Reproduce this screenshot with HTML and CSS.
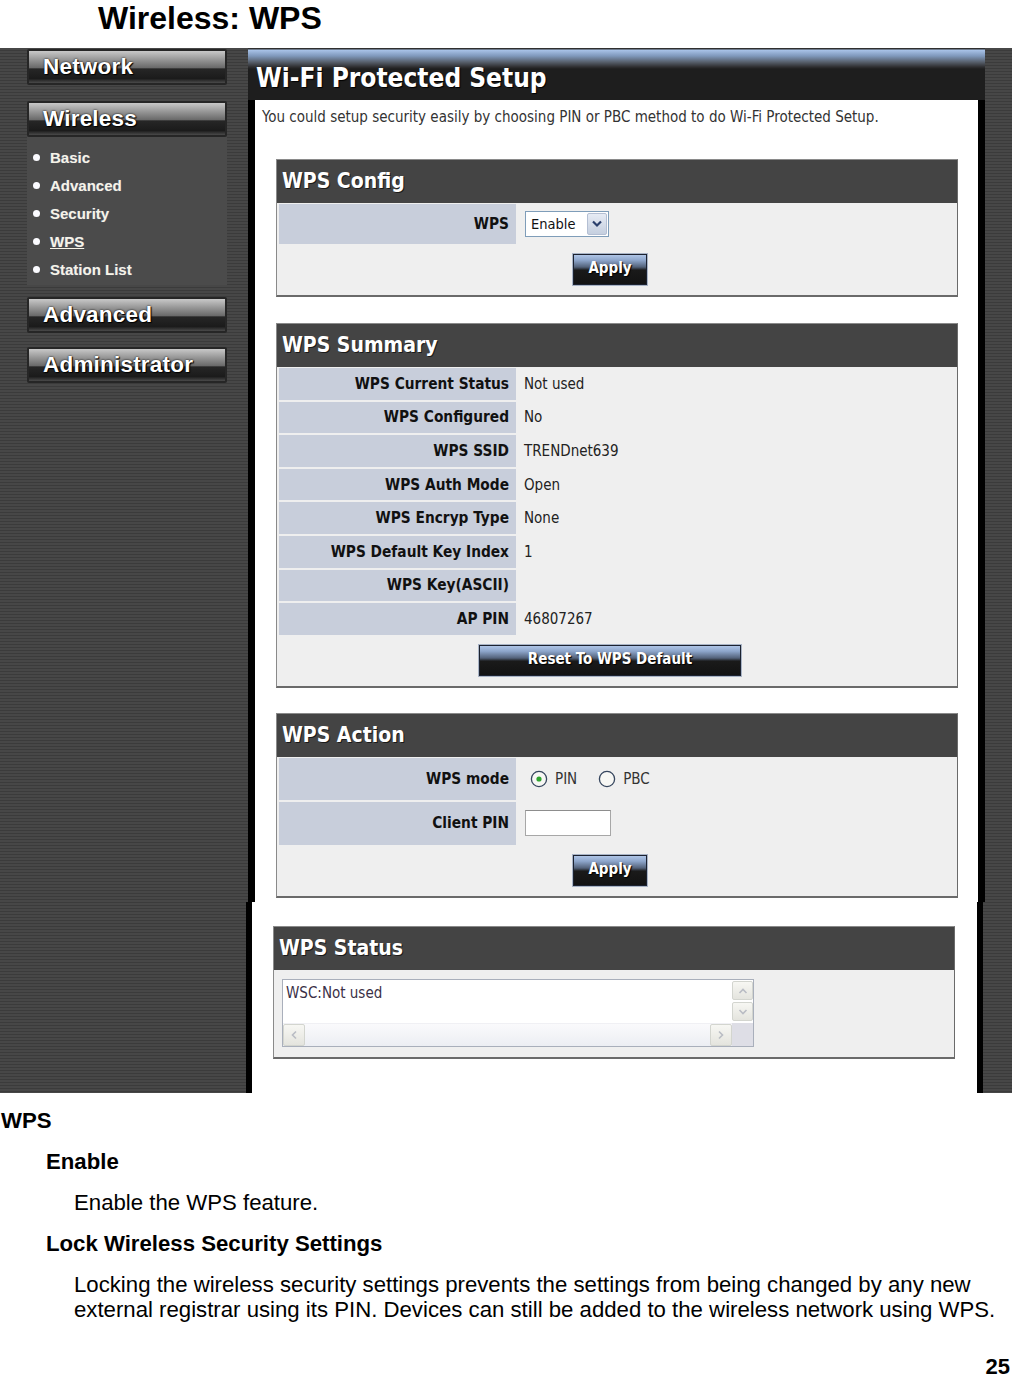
FILE: index.html
```html
<!DOCTYPE html>
<html>
<head>
<meta charset="utf-8">
<title>Wireless: WPS</title>
<link rel="stylesheet" href="styles.css">
</head>
<body>
<div class="doc-title">Wireless: WPS</div>
<div class="shot">
  <div class="sidebar">
    <div class="nav-btn nb-network">Network</div>
    <div class="nav-btn nb-wireless">Wireless</div>
    <ul class="submenu">
      <li>Basic</li>
      <li>Advanced</li>
      <li>Security</li>
      <li class="current">WPS</li>
      <li>Station List</li>
    </ul>
    <div class="nav-btn nb-adv">Advanced</div>
    <div class="nav-btn nb-admin">Administrator</div>
  </div>
  <div class="main">
    <div class="upper">
      <div class="page-head">Wi-Fi Protected Setup</div>
      <div class="upper-body">
        <p class="intro">You could setup security easily by choosing PIN or PBC method to do Wi-Fi Protected Setup.</p>

        <section class="box box-config">
          <div class="box-head">WPS Config</div>
          <div class="rows">
            <div class="lbl row-40">WPS</div>
            <div class="val">
              <div class="select">
                <span class="select-text">Enable</span>
                <span class="select-btn"><svg width="12" height="8" viewBox="0 0 12 8"><path d="M2 1.5 L6 5.5 L10 1.5" fill="none" stroke="#2b3f6c" stroke-width="2.2"/></svg></span>
              </div>
            </div>
          </div>
          <div class="btn-row"><span class="btn btn-apply">Apply</span></div>
        </section>

        <section class="box box-summary">
          <div class="box-head">WPS Summary</div>
          <div class="rows rows-summary">
            <div class="lbl">WPS Current Status</div><div class="val">Not used</div>
            <div class="lbl">WPS Configured</div><div class="val">No</div>
            <div class="lbl">WPS SSID</div><div class="val">TRENDnet639</div>
            <div class="lbl">WPS Auth Mode</div><div class="val">Open</div>
            <div class="lbl">WPS Encryp Type</div><div class="val">None</div>
            <div class="lbl">WPS Default Key Index</div><div class="val">1</div>
            <div class="lbl">WPS Key(ASCII)</div><div class="val"></div>
            <div class="lbl">AP PIN</div><div class="val">46807267</div>
          </div>
          <div class="btn-row"><span class="btn btn-reset">Reset To WPS Default</span></div>
        </section>

        <section class="box box-action">
          <div class="box-head">WPS Action</div>
          <div class="rows rows-action">
            <div class="lbl">WPS mode</div>
            <div class="val radios">
              <span class="radio"><svg width="18" height="18" viewBox="0 0 18 18"><circle cx="9" cy="9" r="7.6" fill="#f7f7f4" stroke="#36465e" stroke-width="1.3"/><circle cx="9" cy="9" r="2.6" fill="#2fa52f"/></svg>PIN</span>
              <span class="radio"><svg width="18" height="18" viewBox="0 0 18 18"><circle cx="9" cy="9" r="7.6" fill="#f7f7f4" stroke="#36465e" stroke-width="1.3"/></svg>PBC</span>
            </div>
            <div class="lbl">Client PIN</div>
            <div class="val"><span class="text-input"></span></div>
          </div>
          <div class="btn-row"><span class="btn btn-apply">Apply</span></div>
        </section>
      </div>
    </div>
    <div class="lower">
      <section class="box box-status">
        <div class="box-head">WPS Status</div>
        <div class="status-body">
          <div class="ta">
            <div class="ta-text">WSC:Not used</div>
            <div class="vscroll">
              <span class="sbtn"><svg width="10" height="8" viewBox="0 0 10 8"><path d="M1.5 6 L5 2.5 L8.5 6" fill="none" stroke="#b9bcc4" stroke-width="1.6"/></svg></span>
              <span class="sbtn"><svg width="10" height="8" viewBox="0 0 10 8"><path d="M1.5 2 L5 5.5 L8.5 2" fill="none" stroke="#b9bcc4" stroke-width="1.6"/></svg></span>
            </div>
            <div class="hscroll">
              <span class="sbtn"><svg width="8" height="10" viewBox="0 0 8 10"><path d="M6 1.5 L2.5 5 L6 8.5" fill="none" stroke="#b9bcc4" stroke-width="1.6"/></svg></span>
              <span class="sbtn"><svg width="8" height="10" viewBox="0 0 8 10"><path d="M2 1.5 L5.5 5 L2 8.5" fill="none" stroke="#b9bcc4" stroke-width="1.6"/></svg></span>
            </div>
            <div class="corner"></div>
          </div>
        </div>
      </section>
    </div>
  </div>
  <div class="right-strip"></div>
</div>
<div class="doc-text">
  <div class="t-h1">WPS</div>
  <div class="t-h2">Enable</div>
  <div class="t-p">Enable the WPS feature.</div>
  <div class="t-h2">Lock Wireless Security Settings</div>
  <div class="t-para">Locking the wireless security settings prevents the settings from being changed by any new<br>external registrar using its PIN. Devices can still be added to the wireless network using WPS.</div>
  <div class="page-num">25</div>
</div>
</body>
</html>
```

FILE: styles.css
```css
html, body {
  margin: 0;
  padding: 0;
  background: #fff;
}
body {
  width: 1012px;
  height: 1381px;
  overflow: hidden;
  font-family: "Liberation Sans", Arial, sans-serif;
  color: #000;
}

.doc-title {
  height: 48px;
  padding-left: 98px;
  font-weight: bold;
  font-size: 32px;
  line-height: 36px;
}

/* ---------- screenshot ---------- */
.shot {
  display: flex;
  height: 1045px;
  background: repeating-linear-gradient(to bottom, #474747 0, #474747 2px, #3b3b3b 2px, #3b3b3b 3px);
  overflow: hidden;
}

.sidebar {
  width: 248px;
  flex: none;
  padding-top: 1px;
}

.nav-btn {
  margin-left: 27px;
  width: 200px;
  height: 36px;
  box-sizing: border-box;
  border: 2px solid #262626;
  border-radius: 2px;
  background: linear-gradient(to bottom, #c8c8c8 0%, #9a9a9a 25%, #6a6a6a 52%, #262626 56%, #1b1b1b 86%, #4a4a4a 100%);
  color: #fff;
  font-weight: bold;
  font-size: 22.5px;
  line-height: 32px;
  padding-left: 14px;
  text-shadow: 0 0 2px #000, 1px 1px 1px #000;
  letter-spacing: 0.2px;
}
.nb-wireless { margin-top: 16px; }
.nb-adv { margin-top: 12px; }
.nb-admin { margin-top: 14px; }

.submenu {
  list-style: none;
  margin: 0 0 0 27px;
  width: 200px;
  box-sizing: border-box;
  height: 148px;
  padding: 6px 0 0 0;
  background: #4b4b4b;
}
.submenu li {
  display: flex;
  align-items: center;
  height: 28px;
  padding-left: 6px;
  color: #f7f3e6;
  font-weight: bold;
  font-size: 15px;
  text-shadow: 0 0 1px #6a7a9a;
}
.submenu li::before {
  content: "";
  width: 7px;
  height: 7px;
  border-radius: 50%;
  background: #fbfbff;
  margin-right: 10px;
  flex: none;
}
.submenu li.current { text-decoration: underline; }

.main {
  width: 737px;
  flex: none;
  display: flex;
  flex-direction: column;
}

.upper {
  width: 737px;
  height: 854px;
  display: flex;
  flex-direction: column;
}

.page-head {
  height: 52px;
  flex: none;
  box-sizing: border-box;
  background: linear-gradient(to bottom, #303030 0, #303030 1px, #a9c3e8 2px, #7f98bb 8px, #58606c 14px, #2e2e30 19px, #1e1e1e 21px, #1e1e1e 100%);
  color: #fff;
  font-family: "DejaVu Sans Condensed", "DejaVu Sans", sans-serif;
  font-stretch: condensed;
  font-weight: bold;
  font-size: 26px;
  line-height: 30px;
  padding: 15px 0 0 8px;
  text-shadow: 1px 1px 1px #000;
}

.upper-body {
  flex: 1;
  background: #fff;
  border-left: 7px solid #000;
  border-right: 7px solid #000;
  padding-top: 8px;
}

.intro {
  margin: 0 0 0 7px;
  height: 18px;
  line-height: 18px;
  font-family: "DejaVu Sans Condensed", "DejaVu Sans", sans-serif;
  font-stretch: condensed;
  font-size: 15px;
  color: #333;
}

.lower {
  width: 737px;
  height: 191px;
  margin-left: -2px;
  box-sizing: border-box;
  background: #fff;
  border-left: 6px solid #000;
  border-right: 6px solid #000;
  padding-top: 24px;
}

.right-strip { flex: 1; }

/* ---------- boxes ---------- */
.box {
  margin-left: 21px;
  width: 682px;
  box-sizing: border-box;
  border: 1px solid #8a8a8a;
  border-right-color: #6a6a6a;
  border-bottom: 2px solid #6a6a6a;
  background: #efefef;
}
.box-config { margin-top: 33px; }
.box-summary { margin-top: 26px; }
.box-action { margin-top: 25px; }

.box-head {
  height: 43px;
  background: #444;
  color: #fff;
  font-family: "DejaVu Sans Condensed", "DejaVu Sans", sans-serif;
  font-stretch: condensed;
  font-weight: bold;
  font-size: 21px;
  line-height: 43px;
  padding-left: 5px;
  text-shadow: 1px 1px 0 #1a1a1a;
}

.rows {
  display: grid;
  grid-template-columns: 237px 1fr;
  gap: 2px;
  padding: 1px 2px 0 2px;
  grid-auto-rows: 40px;
}
.rows-summary { grid-auto-rows: 31.6px; }
.rows-action { grid-template-rows: 42px 43px; }

.lbl {
  background: #c8cedb;
  display: flex;
  align-items: center;
  justify-content: flex-end;
  padding-right: 7px;
  font-family: "DejaVu Sans Condensed", "DejaVu Sans", sans-serif;
  font-stretch: condensed;
  font-weight: bold;
  font-size: 15.3px;
  color: #111;
}
.val {
  display: flex;
  align-items: center;
  padding-left: 6px;
  font-family: "DejaVu Sans Condensed", "DejaVu Sans", sans-serif;
  font-stretch: condensed;
  font-size: 15px;
  color: #222;
}

.btn-row {
  display: flex;
  justify-content: center;
  padding: 9px 14px 9px 0;
}
.btn {
  height: 33px;
  box-sizing: border-box;
  border: 1px solid #a9b4c6;
  box-shadow: inset 0 0 0 1px #1c2230;
  background: linear-gradient(to bottom, #b5cbec 0%, #8ea6cb 20%, #53627a 42%, #1a1a1a 52%, #121212 100%);
  color: #fff;
  font-family: "DejaVu Sans Condensed", "DejaVu Sans", sans-serif;
  font-stretch: condensed;
  font-weight: bold;
  font-size: 15px;
  line-height: 29px;
  text-align: center;
  text-shadow: 1px 1px 1px #000;
}
.btn-apply { width: 76px; }
.btn-reset { width: 264px; }

/* select */
.select {
  display: flex;
  align-items: center;
  width: 84px;
  height: 26px;
  box-sizing: border-box;
  border: 1px solid #7f9db9;
  background: #fff;
  margin-left: 1px;
  padding: 1px;
}
.select-text {
  flex: 1;
  padding-left: 4px;
  font-size: 14.5px;
  color: #111;
}
.select-btn {
  width: 20px;
  height: 22px;
  box-sizing: border-box;
  border: 1px solid #b4bfd3;
  border-radius: 2px;
  background: linear-gradient(to bottom, #e6ebf4, #c5cfdf);
  display: flex;
  align-items: center;
  justify-content: center;
}

/* radios */
.radios { gap: 21px; padding-left: 12px; }
.radio {
  display: flex;
  align-items: center;
  gap: 7px;
  font-size: 15px;
  color: #333;
}
.radio svg { display: block; }

.text-input {
  display: block;
  width: 86px;
  height: 26px;
  box-sizing: border-box;
  border: 1px solid #a7a7a7;
  border-top-color: #8d8d8d;
  background: #fff;
  margin-left: 1px;
}

/* status */
.status-body { padding: 9px 0 10px 8px; }
.ta {
  width: 472px;
  height: 68px;
  box-sizing: border-box;
  border: 1px solid #a9afbb;
  display: grid;
  grid-template-columns: 1fr 21px;
  grid-template-rows: 1fr 23px;
  background: #fff;
}
.ta-text {
  padding: 4px 3px;
  font-family: "DejaVu Sans Condensed", "DejaVu Sans", sans-serif;
  font-stretch: condensed;
  font-size: 15px;
  color: #3a3046;
}
.vscroll {
  display: flex;
  flex-direction: column;
  gap: 2px;
  padding-top: 1px;
  background: #fff;
}
.hscroll {
  display: flex;
  justify-content: space-between;
  background: linear-gradient(to bottom, #fafafc, #eceef3);
  border-top: 1px solid #f0f0f4;
}
.corner { background: #dedee6; }
.sbtn {
  display: flex;
  align-items: center;
  justify-content: center;
  width: 21px;
  height: 19px;
  box-sizing: border-box;
  border: 1px solid #d3d5cf;
  border-radius: 2px;
  background: linear-gradient(to bottom, #f7f7f3, #e4e4de);
}
.hscroll .sbtn { width: 22px; height: 22px; }

/* ---------- document text ---------- */
.doc-text {
  font-size: 22.2px;
  padding-top: 7px;
}
.t-h1 {
  font-weight: bold;
  line-height: 41px;
  padding-left: 1px;
}
.t-h2 {
  font-weight: bold;
  line-height: 41px;
  padding-left: 46px;
}
.t-p {
  line-height: 41px;
  padding-left: 74px;
}
.t-para {
  line-height: 25px;
  padding-left: 74px;
  margin-top: 8px;
}
.page-num {
  font-weight: bold;
  font-size: 22px;
  text-align: right;
  line-height: 26px;
  margin-top: 32px;
  padding-right: 2px;
}
```
